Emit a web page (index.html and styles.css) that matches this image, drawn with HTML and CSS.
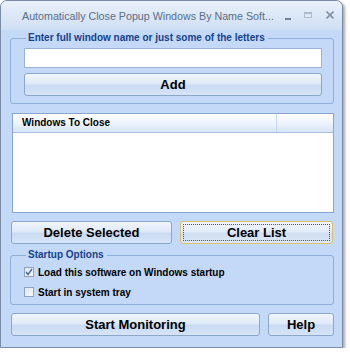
FILE: index.html
```html
<!DOCTYPE html>
<html lang="en">
<head>
<meta charset="UTF-8">
<meta name="viewport" content="width=device-width, initial-scale=1.0">
<title>Automatically Close Popup Windows By Name Software</title>
<link rel="stylesheet" href="styles.css">
</head>
<body>

<div class="window">
    <div class="titlebar">
        <span class="title">Automatically Close Popup Windows By Name Soft...</span>
        <div class="caption-buttons">
            <svg class="cap cap-min" width="8" height="10" viewBox="0 0 8 10"><rect x="1" y="6" width="6" height="2" fill="#6f8199"/></svg>
            <svg class="cap cap-max" width="8" height="10" viewBox="0 0 8 10"><rect x="0.5" y="2.5" width="7" height="5" fill="none" stroke="#b0bccc"/><rect x="0.5" y="2.5" width="7" height="1.5" fill="#b0bccc"/></svg>
            <svg class="cap cap-close" width="8" height="10" viewBox="0 0 8 10"><path d="M0.5 1.5 L7.5 8.5 M7.5 1.5 L0.5 8.5" stroke="#7d8ea6" stroke-width="1.6"/></svg>
        </div>
    </div>

    <div class="client">
        <fieldset class="group group-name">
            <legend>Enter full window name or just some of the letters</legend>
            <input class="textbox" type="text">
            <button class="btn btn-add">Add</button>
        </fieldset>

        <div class="listview">
            <div class="list-header">
                <div class="col col-name">Windows To Close</div>
                <div class="col col-rest"></div>
            </div>
            <div class="list-body">
                <!-- window names go here -->
            </div>
        </div>

        <div class="button-row list-buttons">
            <button class="btn btn-delete">Delete Selected</button>
            <button class="btn btn-clear focused"><span class="focus-rect">Clear List</span></button>
        </div>

        <fieldset class="group group-startup">
            <legend>Startup Options</legend>
            <label class="check">
                <span class="box"><svg width="8" height="8" viewBox="0 0 8 8"><path d="M1 4 L3 6.5 L7 1" fill="none" stroke="#4a6a98" stroke-width="1.4"/></svg></span>
                Load this software on Windows startup
            </label>
            <label class="check">
                <span class="box"></span>
                Start in system tray
            </label>
        </fieldset>

        <div class="button-row bottom-buttons">
            <button class="btn btn-start">Start Monitoring</button>
            <button class="btn btn-help">Help</button>
        </div>
    </div>
</div>

</body>
</html>
```

FILE: styles.css
```css
body {
    margin: 0;
    background-color: #ffffff;
    font-family: "Liberation Sans", Arial, sans-serif;
}

.window {
    width: 343px;
    height: 348px;
    box-sizing: border-box;
    border: 1px solid #7b8ca6;
    border-radius: 7px 7px 0 0;
    background-color: #c3d9f7;
    box-shadow: 2px 2px 3px rgba(0, 0, 0, 0.35);
    display: flex;
    flex-direction: column;
}

.titlebar {
    height: 29px;
    display: flex;
    align-items: center;
    padding: 0 8px 0 21px;
    border-radius: 6px 6px 0 0;
    background: linear-gradient(#eaf1fb, #d9e6f6 60%, #cfdff4);
}

.title {
    font-size: 10.7px;
    color: #5c6d86;
    white-space: nowrap;
}

.caption-buttons {
    display: flex;
    margin-left: auto;
    gap: 12px;
}

.cap {
    display: block;
}

.cap-min {
    margin-top: 2px;
}

.cap-close {
    margin-left: 2px;
}

.client {
    flex: 1;
    padding: 2px 8px 0 9px;
}

.group {
    margin: 0;
    border: 1px solid #8eaedb;
    border-radius: 3px;
}

.group legend {
    padding: 0 3px 0 2px;
    margin-left: 2px;
    font-size: 10px;
    line-height: 12px;
    font-weight: bold;
    color: #15428b;
}

.group-name {
    padding: 4px 11px 7px 13px;
}

.textbox {
    display: block;
    width: 100%;
    height: 20px;
    box-sizing: border-box;
    margin: 0 0 5px 0;
    border: 1px solid #9ab3d6;
    background-color: #ffffff;
    outline: none;
}

.btn {
    display: block;
    height: 23px;
    box-sizing: border-box;
    padding: 0;
    border: 1px solid #8ca6cc;
    border-radius: 3px;
    background: linear-gradient(#f1f6fd, #dfe9f8 45%, #c9dbf3 55%, #d6e4f7);
    font-family: "Liberation Sans", Arial, sans-serif;
    font-size: 13px;
    font-weight: bold;
    color: #000000;
}

.btn-add {
    width: 100%;
}

.listview {
    margin: 9px 0 0 2px;
    height: 100px;
    box-sizing: border-box;
    border: 1px solid #86a5cf;
    background-color: #ffffff;
    display: flex;
    flex-direction: column;
}

.list-header {
    height: 18px;
    display: flex;
    background: linear-gradient(#ffffff, #eef4fc 50%, #d6e4f6);
    border-bottom: 1px solid #aac3e3;
}

.col {
    font-size: 10px;
    font-weight: bold;
    line-height: 18px;
    color: #000000;
}

.col-name {
    width: 264px;
    box-sizing: border-box;
    padding-left: 9px;
    border-right: 1px solid #c7d7ec;
}

.col-rest {
    flex: 1;
}

.list-body {
    flex: 1;
}

.button-row {
    display: flex;
    gap: 8px;
}

.list-buttons {
    margin-top: 8px;
    padding: 0 1px;
}

.btn-delete {
    width: 161px;
}

.btn-clear {
    flex: 1;
    padding: 2px;
}

.btn.focused {
    border-color: #d9c06a;
    background: linear-gradient(#f2f6fc, #e2ebf8 45%, #d0dff3 55%, #dde8f7);
}

.focus-rect {
    display: flex;
    align-items: center;
    justify-content: center;
    height: 100%;
    box-sizing: border-box;
    border: 1px dotted #555555;
}

.group-startup {
    margin-top: 5px;
    padding: 1px 8px 2px 13px;
}

.check {
    height: 20px;
    display: flex;
    align-items: center;
    font-size: 10px;
    font-weight: bold;
    color: #000000;
}

.box {
    width: 10px;
    height: 10px;
    box-sizing: border-box;
    margin-right: 4px;
    border: 1px solid #8ea3c2;
    background: linear-gradient(135deg, #dfe6ee, #f6f8fb);
    display: flex;
    align-items: center;
    justify-content: center;
}

.bottom-buttons {
    margin-top: 8px;
    padding-left: 1px;
}

.btn-start {
    width: 249px;
}

.btn-help {
    flex: 1;
}
```
